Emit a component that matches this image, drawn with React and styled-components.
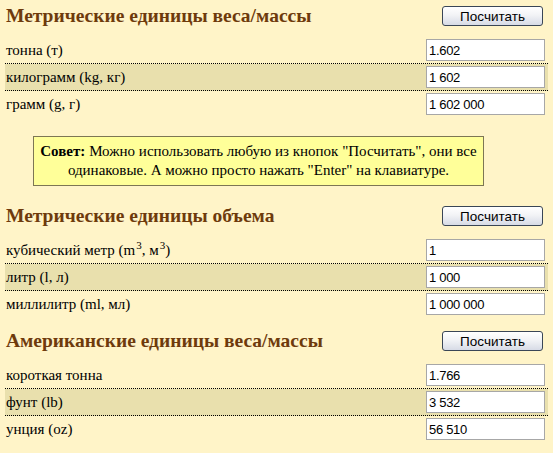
import React from 'react';
import styled, { createGlobalStyle } from 'styled-components';

const Global = createGlobalStyle`
  html, body {
    margin: 0;
    padding: 0;
    background: #fff4c8;
  }
`;

const Page = styled.div`
  width: 543px;
  padding: 0 5px;
  font-family: "Liberation Serif", "Times New Roman", serif;
  color: #000;
`;

const Section = styled.div`
  margin-bottom: 8px;
`;

const Header = styled.div`
  display: flex;
  justify-content: space-between;
  align-items: center;
  height: 20px;
  padding: 6px 5px 11px 1px;
`;

const Title = styled.h2`
  margin: 0;
  font-size: 19.5px;
  font-weight: bold;
  color: #6e3a0c;
`;

const Button = styled.button`
  width: 101px;
  height: 20px;
  padding: 0;
  border: 1px solid #3a4656;
  border-radius: 3px;
  background: linear-gradient(#ffffff 0%, #f2f3f6 45%, #d7dbe6 100%);
  font-family: "Liberation Sans", Arial, sans-serif;
  font-size: 13.5px;
  color: #000;
`;

const Row = styled.div`
  display: flex;
  align-items: center;
  justify-content: space-between;
  height: 26px;
  background: ${p => (p.$alt ? '#e9e0ad' : 'transparent')};
  border-bottom: ${p => (p.$last ? 'none' : '1px dotted #000')};
`;

const Label = styled.span`
  padding-left: 1px;
  font-size: 15px;
  sup {
    font-size: 11px;
    line-height: 0;
    margin-left: 1px;
  }
`;

const Input = styled.input`
  box-sizing: border-box;
  width: 119px;
  height: 22px;
  margin-right: 3px;
  padding: 0 2px;
  border: 1px solid #a7a7a7;
  background: #fff;
  font-family: "Liberation Sans", Arial, sans-serif;
  font-size: 13px;
  color: #000;
  letter-spacing: -0.3px;
`;

const Tip = styled.div`
  box-sizing: border-box;
  width: 451px;
  margin: 19px 0 14px 28px;
  padding: 5px 2px;
  background: #ffff99;
  border: 1px solid #7d7654;
  font-size: 15px;
  line-height: 19px;
  text-align: center;
`;

const sections = [
  {
    title: 'Метрические единицы веса/массы',
    rows: [
      { label: 'тонна (т)', value: '1.602' },
      { label: 'килограмм (kg, кг)', value: '1 602' },
      { label: 'грамм (g, г)', value: '1 602 000' },
    ],
  },
  {
    title: 'Метрические единицы объема',
    rows: [
      { label: <>кубический метр (m<sup>3</sup>, м<sup>3</sup>)</>, value: '1' },
      { label: 'литр (l, л)', value: '1 000' },
      { label: 'миллилитр (ml, мл)', value: '1 000 000' },
    ],
  },
  {
    title: 'Американские единицы веса/массы',
    rows: [
      { label: 'короткая тонна', value: '1.766' },
      { label: 'фунт (lb)', value: '3 532' },
      { label: 'унция (oz)', value: '56 510' },
    ],
  },
];

const Block = ({ data }) => (
  <Section>
    <Header>
      <Title>{data.title}</Title>
      <Button>Посчитать</Button>
    </Header>
    {data.rows.map((r, i) => (
      <Row key={i} $alt={i === 1} $last={i === data.rows.length - 1}>
        <Label>{r.label}</Label>
        <Input defaultValue={r.value} />
      </Row>
    ))}
  </Section>
);

export default function App() {
  return (
    <Page>
      <Global />
      <Block data={sections[0]} />
      <Tip>
        <b>Совет:</b> Можно использовать любую из кнопок "Посчитать", они все
        одинаковые. А можно просто нажать "Enter" на клавиатуре.
      </Tip>
      <Block data={sections[1]} />
      <Block data={sections[2]} />
    </Page>
  );
}
